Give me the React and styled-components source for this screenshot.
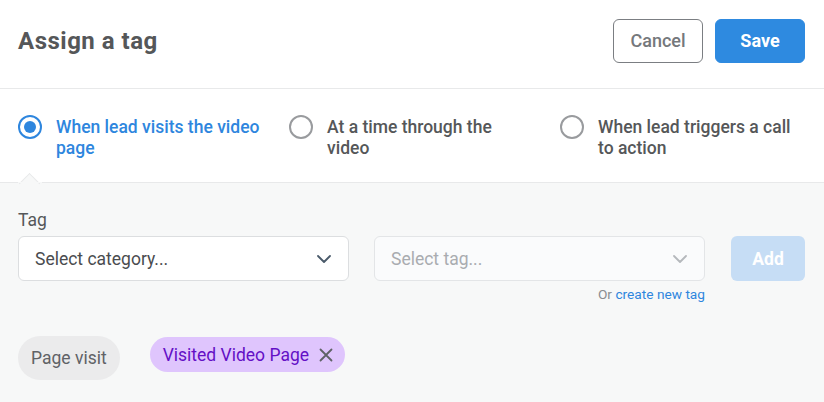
import React, { useState } from 'react';
import styled, { createGlobalStyle } from 'styled-components';

const GlobalStyle = createGlobalStyle`
  html, body {
    margin: 0;
    padding: 0;
    background: #f7f8f8;
    font-family: Roboto, "Liberation Sans", Arial, sans-serif;
  }
  * { box-sizing: border-box; }
`;

const Page = styled.div`
  width: 824px;
  min-height: 402px;
  background: #f7f8f8;
`;

const Header = styled.div`
  height: 89px;
  display: flex;
  align-items: center;
  justify-content: space-between;
  padding: 0 19px 7px 18px;
  background: #fff;
  border-bottom: 1px solid #e8e9ea;
`;

const Title = styled.h1`
  margin: 0;
  font-size: 24px;
  font-weight: 700;
  color: #555759;
  letter-spacing: 0.5px;
`;

const Actions = styled.div`
  display: flex;
  gap: 12px;
`;

const Button = styled.button`
  width: 90px;
  height: 44px;
  border-radius: 6px;
  font-family: inherit;
  font-size: 18px;
  font-weight: ${p => (p.$primary ? 700 : 500)};
  cursor: pointer;
  border: 1px solid ${p => (p.$primary ? '#2e8ae0' : '#7b7e82')};
  background: ${p => (p.$primary ? '#2e8ae0' : '#fff')};
  color: ${p => (p.$primary ? '#fff' : '#75787c')};
`;

const Triggers = styled.div`
  position: relative;
  background: #fff;
  height: 94px;
  padding: 28px 18px 0;
  display: grid;
  grid-template-columns: repeat(3, 245px);
  column-gap: 26px;
  border-bottom: 1px solid #e8e9ea;
`;

const Notch = styled.div`
  position: absolute;
  left: 22px;
  bottom: -9px;
  width: 15px;
  height: 15px;
  background: #f7f8f8;
  border-left: 1px solid #e8e9ea;
  border-top: 1px solid #e8e9ea;
  transform: rotate(45deg);
`;

const NotchCover = styled.div`
  position: absolute;
  left: 18px;
  bottom: -1px;
  width: 24px;
  height: 1px;
  background: #f7f8f8;
`;

const Option = styled.label`
  display: flex;
  align-items: flex-start;
  gap: 14px;
  cursor: pointer;
`;

const Radio = styled.span`
  flex: 0 0 24px;
  width: 24px;
  height: 24px;
  margin-top: -2px;
  border-radius: 50%;
  border: 2px solid ${p => (p.$checked ? '#2e86de' : '#999b9e')};
  display: flex;
  align-items: center;
  justify-content: center;
  &::after {
    content: '';
    width: 12px;
    height: 12px;
    border-radius: 50%;
    background: ${p => (p.$checked ? '#2e86de' : 'transparent')};
  }
`;

const OptionText = styled.span`
  width: 207px;
  font-size: 17.5px;
  line-height: 21px;
  font-weight: 500;
  color: ${p => (p.$checked ? '#2e86de' : '#555759')};
`;

const Body = styled.div`
  padding: 27px 19px 0 18px;
`;

const Label = styled.div`
  font-size: 17.5px;
  line-height: 20px;
  color: #555759;
  margin-bottom: 6px;
`;

const Row = styled.div`
  display: flex;
  align-items: flex-start;
`;

const Field = styled.div`
  display: flex;
  flex-direction: column;
  align-items: flex-end;
  margin-right: ${p => p.$gap || 0}px;
`;

const Select = styled.div`
  width: 331px;
  height: 45px;
  border: 1px solid ${p => (p.$disabled ? '#e3e5e7' : '#dcdee0')};
  border-radius: 6px;
  background: ${p => (p.$disabled ? '#fafbfc' : '#fff')};
  display: flex;
  align-items: center;
  justify-content: space-between;
  padding: 0 17px 0 16px;
  font-size: 17.5px;
  color: ${p => (p.$disabled ? '#a9acb0' : '#4a4c4f')};
`;

const Chevron = ({ color }) => (
  <svg width="14" height="8" viewBox="0 0 14 8" fill="none">
    <path d="M1 1l6 6 6-6" stroke={color} strokeWidth="1.8" strokeLinecap="round" strokeLinejoin="round" />
  </svg>
);

const AddButton = styled.button`
  width: 74px;
  height: 45px;
  border: none;
  border-radius: 6px;
  background: #c6ddf5;
  color: #fff;
  font-family: inherit;
  font-size: 17.5px;
  font-weight: 700;
`;

const Hint = styled.div`
  margin-top: 5px;
  font-size: 13.7px;
  line-height: 16px;
  color: #8a8d91;
  a {
    color: #2e86de;
    text-decoration: none;
  }
`;

const Chips = styled.div`
  display: flex;
  align-items: flex-start;
  gap: 30px;
  margin-top: 34px;
`;

const Chip = styled.div`
  display: inline-flex;
  align-items: center;
  gap: 10px;
  height: ${p => (p.$tag ? 35 : 44)}px;
  margin-top: ${p => (p.$tag ? 1 : 0)}px;
  padding: 0 ${p => (p.$tag ? 12 : 13)}px 0 13px;
  border-radius: 22px;
  font-size: 17.5px;
  background: ${p => (p.$tag ? '#dfc5fd' : '#ebebec')};
  color: ${p => (p.$tag ? '#6410c6' : '#606266')};
`;

const Remove = () => (
  <svg width="14" height="14" viewBox="0 0 14 14">
    <path d="M1.5 1.5l11 11M12.5 1.5l-11 11" stroke="#5f6266" strokeWidth="1.8" strokeLinecap="round" />
  </svg>
);

const options = [
  'When lead visits the video page',
  'At a time through the video',
  'When lead triggers a call to action',
];

export default function App() {
  const [selected, setSelected] = useState(0);
  return (
    <Page>
      <GlobalStyle />
      <Header>
        <Title>Assign a tag</Title>
        <Actions>
          <Button>Cancel</Button>
          <Button $primary>Save</Button>
        </Actions>
      </Header>
      <Triggers>
        {options.map((o, i) => (
          <Option key={o} onClick={() => setSelected(i)}>
            <Radio $checked={selected === i} />
            <OptionText $checked={selected === i}>{o}</OptionText>
          </Option>
        ))}
        <Notch />
        <NotchCover />
      </Triggers>
      <Body>
        <Label>Tag</Label>
        <Row>
          <Field $gap={25}>
            <Select>
              Select category...
              <Chevron color="#4a5a6a" />
            </Select>
          </Field>
          <Field $gap={26}>
            <Select $disabled>
              Select tag...
              <Chevron color="#b5b8bc" />
            </Select>
            <Hint>
              Or <a href="#">create new tag</a>
            </Hint>
          </Field>
          <AddButton>Add</AddButton>
        </Row>
        <Chips>
          <Chip>Page visit</Chip>
          <Chip $tag>
            Visited Video Page
            <Remove />
          </Chip>
        </Chips>
      </Body>
    </Page>
  );
}
